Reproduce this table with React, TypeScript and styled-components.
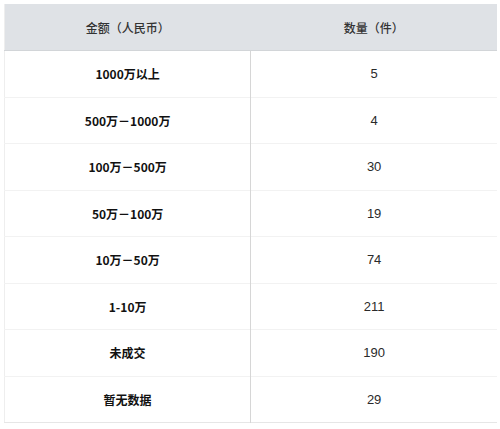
import styled, { createGlobalStyle } from 'styled-components';

const GlobalStyle = createGlobalStyle`
  html, body {
    margin: 0;
    padding: 0;
    background: #ffffff;
  }
  body {
    font-family: "Noto Sans CJK SC", "Liberation Sans", sans-serif;
    color: #1f1f1f;
  }
`;

const Wrapper = styled.div`
  padding: 4px 3px 0 4px;
  width: 500px;
  box-sizing: border-box;
`;

const Table = styled.table`
  width: 100%;
  border-collapse: collapse;
  table-layout: fixed;
  border-left: 1px solid #eeeeee;
  border-bottom: 1px solid #e6e6e6;
`;

const HeadCell = styled.th`
  background: #dfe2e6;
  height: 46px;
  padding: 0;
  font-size: 12px;
  font-weight: 500;
  color: #333333;
  text-align: center;
  border-bottom: 1px solid #d2d5d8;
`;

const Cell = styled.td<{ $bold?: boolean; $first?: boolean }>`
  height: 45.5px;
  padding: 0;
  text-align: center;
  font-size: ${(p) => (p.$bold ? '12px' : '13px')};
  font-weight: ${(p) => (p.$bold ? 700 : 400)};
  font-family: ${(p) =>
    p.$bold
      ? '"Noto Sans CJK SC", "Liberation Sans", sans-serif'
      : '"Liberation Sans", "Noto Sans CJK SC", sans-serif'};
  color: ${(p) => (p.$bold ? '#111111' : '#2a2a2a')};
  border-right: ${(p) => (p.$first ? '1px solid #d6d6d6' : 'none')};
  border-top: 1px solid #f2f2f2;
`;

const rows = [
  ['1000万以上', '5'],
  ['500万－1000万', '4'],
  ['100万－500万', '30'],
  ['50万－100万', '19'],
  ['10万－50万', '74'],
  ['1-10万', '211'],
  ['未成交', '190'],
  ['暂无数据', '29'],
];

export default function App() {
  return (
    <>
      <GlobalStyle />
      <Wrapper>
        <Table>
          <thead>
            <tr>
              <HeadCell>金额（人民币）</HeadCell>
              <HeadCell>数量（件）</HeadCell>
            </tr>
          </thead>
          <tbody>
            {rows.map(([amount, count]) => (
              <tr key={amount}>
                <Cell $bold $first>
                  {amount}
                </Cell>
                <Cell>{count}</Cell>
              </tr>
            ))}
          </tbody>
        </Table>
      </Wrapper>
    </>
  );
}
